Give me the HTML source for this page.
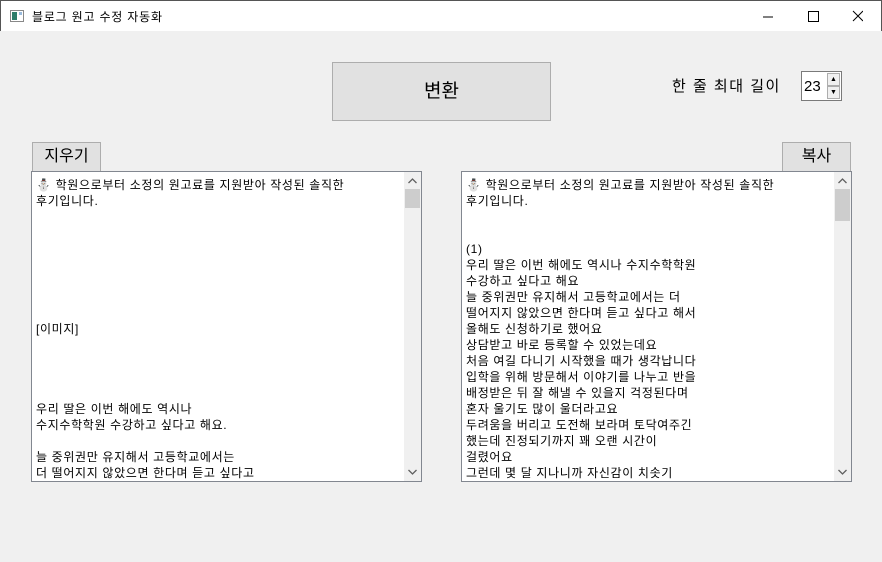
<!DOCTYPE html>
<html><head><meta charset="utf-8"><style>
*{box-sizing:border-box;margin:0;padding:0}
body{width:882px;height:562px;background:#f0f0f0;font-family:"Liberation Sans","Noto Sans CJK KR","NanumGothic",sans-serif;position:relative;overflow:hidden;color:#000}
.tb{position:absolute;left:0;top:0;width:882px;height:31px;background:#fff;border:1px solid #555;border-bottom:none}
.tb .t{position:absolute;left:31px;top:7px;font-size:12px;letter-spacing:0.8px}
.btn{position:absolute;background:#e1e1e1;border:1px solid #adadad;text-align:center}
.box{position:absolute;background:#fff;border:1px solid #828790;overflow:hidden}
.txt{position:absolute;left:4px;top:5px;font-size:12px;line-height:16px;white-space:pre;letter-spacing:0.65px}
.sb{position:absolute;right:0;top:0;width:17px;height:100%;background:#f0f0f0}
.thumb{position:absolute;left:1px;top:17px;width:15px;height:19px;background:#cdcdcd}
</style></head><body>
<div class="tb">
<svg style="position:absolute;left:9px;top:9px" width="14" height="12"><rect x="0.5" y="0.5" width="13" height="11" fill="#fff" stroke="#888"/><rect x="2" y="2" width="5" height="8" fill="#2e7d6a"/><rect x="9" y="2" width="3" height="3" fill="#9bd"/></svg>
<div class="t">블로그 원고 수정 자동화</div>
<svg style="position:absolute;left:762px;top:9px" width="100" height="14"><line x1="0" y1="7" x2="10" y2="7" stroke="#000"/><rect x="45.5" y="1.5" width="10" height="10" fill="none" stroke="#000"/><path d="M90 1L100 11M100 1L90 11" stroke="#000"/></svg>
</div>
<div class="btn" style="left:332px;top:62px;width:219px;height:59px;font-size:19px;line-height:57px">변환</div>
<div style="position:absolute;left:672px;top:75px;font-size:15px;letter-spacing:1.5px">한 줄 최대 길이</div>
<div style="position:absolute;left:801px;top:71px;width:41px;height:30px;background:#fff;border:1px solid #7a7a7a">
<div style="position:absolute;left:2px;top:6px;font-size:15px">23</div>
<div style="position:absolute;left:25px;top:1px;width:13px;height:13px;background:#f0f0f0;border:1px solid #adadad;font-size:7px;text-align:center;line-height:11px">▲</div>
<div style="position:absolute;left:25px;top:14px;width:13px;height:13px;background:#f0f0f0;border:1px solid #adadad;font-size:7px;text-align:center;line-height:11px">▼</div>
</div>
<div class="btn" style="left:32px;top:142px;width:69px;height:30px;font-size:16px;line-height:28px">지우기</div>
<div class="btn" style="left:782px;top:142px;width:69px;height:30px;font-size:16px;line-height:28px">복사</div>
<div class="box" style="left:31px;top:171px;width:391px;height:311px">
<div class="txt">⛄ 학원으로부터 소정의 원고료를 지원받아 작성된 솔직한
후기입니다.







[이미지]




우리 딸은 이번 해에도 역시나
수지수학학원 수강하고 싶다고 해요.

늘 중위권만 유지해서 고등학교에서는
더 떨어지지 않았으면 한다며 듣고 싶다고</div>
<div class="sb"><svg style="position:absolute;left:4px;top:6px" width="9" height="6"><path d="M0.5 5L4.5 1L8.5 5" fill="none" stroke="#606060" stroke-width="1.3"/></svg><div class="thumb"></div><svg style="position:absolute;left:4px;bottom:6px" width="9" height="6"><path d="M0.5 1L4.5 5L8.5 1" fill="none" stroke="#606060" stroke-width="1.3"/></svg></div>
</div>
<div class="box" style="left:461px;top:171px;width:391px;height:311px">
<div class="txt">⛄ 학원으로부터 소정의 원고료를 지원받아 작성된 솔직한
후기입니다.


(1)
우리 딸은 이번 해에도 역시나 수지수학학원
수강하고 싶다고 해요
늘 중위권만 유지해서 고등학교에서는 더
떨어지지 않았으면 한다며 듣고 싶다고 해서
올해도 신청하기로 했어요
상담받고 바로 등록할 수 있었는데요
처음 여길 다니기 시작했을 때가 생각납니다
입학을 위해 방문해서 이야기를 나누고 반을
배정받은 뒤 잘 해낼 수 있을지 걱정된다며
혼자 울기도 많이 울더라고요
두려움을 버리고 도전해 보라며 토닥여주긴
했는데 진정되기까지 꽤 오랜 시간이
걸렸어요
그런데 몇 달 지나니까 자신감이 치솟기</div>
<div class="sb"><svg style="position:absolute;left:4px;top:6px" width="9" height="6"><path d="M0.5 5L4.5 1L8.5 5" fill="none" stroke="#606060" stroke-width="1.3"/></svg><div class="thumb" style="height:32px"></div><svg style="position:absolute;left:4px;bottom:6px" width="9" height="6"><path d="M0.5 1L4.5 5L8.5 1" fill="none" stroke="#606060" stroke-width="1.3"/></svg></div>
</div>
</body></html>
